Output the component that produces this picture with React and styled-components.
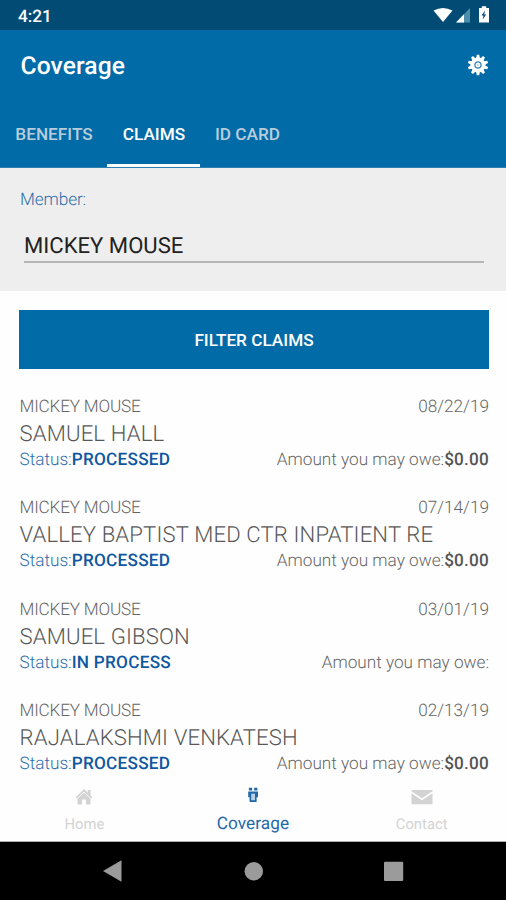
import React from "react";
import styled, { createGlobalStyle } from "styled-components";

const GlobalStyle = createGlobalStyle`
  *, *::before, *::after { box-sizing: border-box; }
  body { margin: 0; background: #fff; font-family: Roboto, "Liberation Sans", sans-serif; text-rendering: geometricPrecision; }
  button { font: inherit; border: 0; padding: 0; background: none; }
`;

const Screen = styled.div`
  width: 506px;
  height: 900px;
  display: flex;
  flex-direction: column;
  overflow: hidden;
  background: #fefefe;
`;

const StatusBar = styled.div`
  height: 30px;
  flex: none;
  display: flex;
  align-items: center;
  justify-content: space-between;
  padding: 3px 16px 0 18px;
  background: #014b74;
  color: #fff;
  font-size: 17.2px;
  font-weight: 500;
  line-height: 20px;
`;

const StatusIcons = styled.svg`
  width: 58px;
  height: 18px;
  margin-top: -4px;
`;

const AppBar = styled.header`
  height: 138px;
  flex: none;
  display: flex;
  flex-direction: column;
  justify-content: space-between;
  background: #016ba8;
  border-bottom: 1px solid #2d7fb1;
`;

const TitleRow = styled.div`
  height: 70px;
  display: flex;
  align-items: center;
  justify-content: space-between;
  padding: 3px 17.5px 0 20.5px;
`;

const Title = styled.h1`
  margin: 1px 0 0;
  color: #fff;
  font-size: 24.6px;
  line-height: 30px;
  font-weight: 500;
  letter-spacing: 0.1px;
`;

const GearIcon = styled.svg`
  width: 22px;
  height: 22px;
  margin-top: -4px;
`;

const Tabs = styled.nav`
  display: flex;
  height: 67px;
`;

const Tab = styled.button`
  width: ${(p) => p.$width}px;
  height: 67px;
  padding: 3px 0 0 1px;
  border-bottom: 3px solid ${(p) => (p.$active ? "#fff" : "transparent")};
  color: ${(p) => (p.$active ? "#fff" : "#b8cddc")};
  font-size: 17.2px;
  font-weight: 500;
  white-space: nowrap;
`;

const MemberPanel = styled.section`
  height: 123px;
  flex: none;
  padding: 21px 22px 0 20px;
  background: #eeeeee;
`;

const MemberLabel = styled.div`
  color: #2f6fab;
  font-size: 17.2px;
  line-height: 22px;
  font-weight: 350;
  letter-spacing: -0.1px;
`;

const MemberField = styled.div`
  height: 42px;
  margin: 10px 0 0 4px;
  padding-top: 11px;
  border-bottom: 2px solid #b5b5b5;
  color: #222;
  font-size: 22.1px;
  line-height: 28px;
  font-weight: 400;
`;

const FilterButton = styled.button`
  height: 59px;
  flex: none;
  margin: 19px 17px 0 19px;
  padding-top: 1px;
  background: #016ba8;
  color: #fff;
  font-size: 17.2px;
  font-weight: 500;
`;

const ClaimList = styled.main`
  flex: 1;
  min-height: 0;
  overflow: hidden;
  display: flex;
  flex-direction: column;
  padding: 27px 17px 0 19.5px;
`;

const Claim = styled.article`
  height: 101.25px;
  flex: none;
`;

const ClaimRow = styled.div`
  display: flex;
  justify-content: space-between;
  height: 22px;
  line-height: 22px;
  font-size: 17.2px;
  color: #666;
  font-weight: 350;
`;

const Provider = styled.div`
  height: 31px;
  line-height: 32px;
  font-size: 22.1px;
  color: #585858;
  font-weight: 300;
  letter-spacing: 0.15px;
  white-space: nowrap;
`;

const Patient = styled.span`
  letter-spacing: -0.2px;
`;

const ClaimDate = styled.span``;

const Status = styled.span`
  color: #2a6cab;
  b { font-weight: 500; color: #0f58a0; letter-spacing: 0.25px; }
`;

const Amount = styled.span`
  b { font-weight: 500; color: #555; letter-spacing: 0.2px; }
`;

const BottomTabs = styled.nav`
  height: 65px;
  flex: none;
  display: grid;
  grid-template-columns: repeat(3, 1fr);
  border-bottom: 1px solid #b0b0b0;
`;

const BottomTab = styled.div`
  display: flex;
  flex-direction: column;
  align-items: center;
  padding-top: 8px;
  color: ${(p) => (p.$active ? "#2268a8" : "#d3d3d3")};
  svg { width: 24px; height: 22px; }
  span {
    margin-top: 7px;
    line-height: 20px;
    font-size: ${(p) => (p.$active ? 17.2 : 14.8)}px;
    letter-spacing: ${(p) => (p.$active ? 0.1 : 0)}px;
  }
`;

const SystemNav = styled.footer`
  height: 58px;
  flex: none;
  display: flex;
  justify-content: center;
  background: #000;
  svg { width: 350px; height: 58px; }
`;

const claims = [
  { date: "08/22/19", provider: "SAMUEL HALL", status: "PROCESSED", amount: "$0.00" },
  { date: "07/14/19", provider: "VALLEY BAPTIST MED CTR INPATIENT RE", status: "PROCESSED", amount: "$0.00" },
  { date: "03/01/19", provider: "SAMUEL GIBSON", status: "IN PROCESS", amount: "" },
  { date: "02/13/19", provider: "RAJALAKSHMI VENKATESH", status: "PROCESSED", amount: "$0.00" },
];

const gearTeeth = Array.from({ length: 10 }, (_, i) => i * 36);

export default function App() {
  return (
    <Screen>
      <GlobalStyle />
      <StatusBar>
        <span>4:21</span>
        <StatusIcons viewBox="0 0 58 18">
          <path d="M1.5 4.6Q11 -.8 20.5 4.6L11 16Z" fill="#fff" />
          <path d="M38 2V16.5H24Z" fill="#4d8fab" />
          <path d="M32 8.2V16.5H24Z" fill="#fff" />
          <path d="M47 2h2.8V.3h4.4V2H57v14.5H47Z" fill="#fff" />
          <path d="M53 4.5l-3.5 5h2l-.8 4 3.5-5h-2Z" fill="#014b74" />
        </StatusIcons>
      </StatusBar>
      <AppBar>
        <TitleRow>
          <Title>Coverage</Title>
          <GearIcon viewBox="-11 -11 22 22">
            {gearTeeth.map((a) => (
              <path key={a} d="M-2 -6L-1.2 -10.2H1.2L2 -6Z" fill="#fff" transform={`rotate(${a})`} />
            ))}
            <circle r="7.6" fill="#fff" />
            <circle r="3.1" fill="none" stroke="#3580b1" strokeWidth="1.3" />
            <circle r="1" fill="#b7d2e3" />
          </GearIcon>
        </TitleRow>
        <Tabs>
          <Tab $width={107}>BENEFITS</Tab>
          <Tab $width={93} $active>CLAIMS</Tab>
          <Tab $width={94}>ID CARD</Tab>
        </Tabs>
      </AppBar>
      <MemberPanel>
        <MemberLabel>Member:</MemberLabel>
        <MemberField>MICKEY MOUSE</MemberField>
      </MemberPanel>
      <FilterButton>FILTER CLAIMS</FilterButton>
      <ClaimList>
        {claims.map((c) => (
          <Claim key={c.date}>
            <ClaimRow>
              <Patient>MICKEY MOUSE</Patient>
              <ClaimDate>{c.date}</ClaimDate>
            </ClaimRow>
            <Provider>{c.provider}</Provider>
            <ClaimRow>
              <Status>Status:<b>{c.status}</b></Status>
              <Amount>Amount you may owe:<b>{c.amount}</b></Amount>
            </ClaimRow>
          </Claim>
        ))}
      </ClaimList>
      <BottomTabs>
        <BottomTab>
          <svg viewBox="0 0 24 22" fill="currentColor">
            <path d="M12 4L3.6 12.4L5 13.6L12 6.8L19 13.6L20.4 12.4L18.6 10.5V5H15.8V7.8Z" />
            <path d="M5.5 13.8L12 7.8L18.5 13.8V19.5H14V14.5H10V19.5H5.5Z" />
          </svg>
          <span>Home</span>
        </BottomTab>
        <BottomTab $active>
          <svg viewBox="0 0 24 22">
            <path d="M7.9 2.8H11.2V5.4H7.9ZM13.1 2.8H16.4V5.4H13.1Z" fill="currentColor" />
            <path d="M7.2 6.5H17V12.2H15.6V17H8.6V12.2H7.2Z" fill="currentColor" />
            <path d="M10.2 8.7H14V15.2H10.2Z" fill="#b7d2e8" />
          </svg>
          <span>Coverage</span>
        </BottomTab>
        <BottomTab>
          <svg viewBox="0 0 24 22" fill="currentColor">
            <path d="M1.5 5H22.5V6.3L12 13.3L1.5 6.3Z" />
            <path d="M1.5 8.3L12 15.3L22.5 8.3V19.2H1.5Z" />
          </svg>
          <span>Contact</span>
        </BottomTab>
      </BottomTabs>
      <SystemNav>
        <svg viewBox="78 0 350 58" fill="#9b9b9b">
          <path d="M103 29L121.5 18.3V39.7Z" />
          <circle cx="253.8" cy="29.2" r="9.2" />
          <rect x="384" y="19.8" width="19.2" height="19.2" rx="1" />
        </svg>
      </SystemNav>
    </Screen>
  );
}
